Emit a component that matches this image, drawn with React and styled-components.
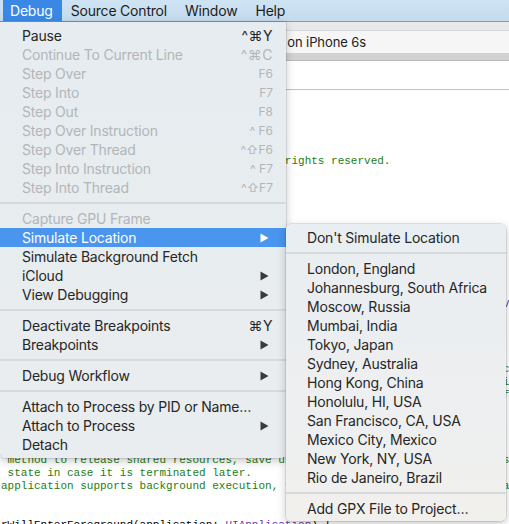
import React from "react";
import styled, { createGlobalStyle } from "styled-components";

const GlobalStyle = createGlobalStyle`
  html, body {
    margin: 0;
    padding: 0;
    background: #ffffff;
  }
  body {
    width: 509px;
    height: 524px;
    overflow: hidden;
    font-family: Inter, "Liberation Sans", "DejaVu Sans", sans-serif;
  }
`;

const GREEN = "#1d7d12";
const PURPLE = "#6c36a9";
const BLACK = "#000000";

const blank = [["", BLACK]];

// editor lines, each an array of [text, colour]
const codeLines = [
  [["//", GREEN]],
  [["//  AppDelegate.swift", GREEN]],
  [["//  Bullseye", GREEN]],
  [["//", GREEN]],
  [["//  Created by M. Hollemans.", GREEN]],
  [["    //  Copyright © 2016 Razeware LLC. All rights reserved.", GREEN]],
  [["//", GREEN]],
  blank,
  [["import UIKit", BLACK]],
  blank,
  [["@UIApplicationMain", BLACK]],
  [["class AppDelegate: UIResponder, UIApplicationDelegate {", BLACK]],
  blank,
  [["    var window: UIWindow?", BLACK]],
  blank,
  blank,
  [
    ["    func application(application: UIApplication, didFinishLaunching".padEnd(76), BLACK],
    ["Var", PURPLE],
  ],
  [["        // Override point for customization after application launch.", GREEN]],
  [["        return true", BLACK]],
  [["    }", BLACK]],
  blank,
  [["        // Sent when the application is about to move from active to in".padEnd(76) + "c", GREEN]],
  [["        // Use this method to pause ongoing tasks, disable timers, and ".padEnd(76) + "i", GREEN]],
  [["    }".padEnd(76) + "f", GREEN]],
  blank,
  [["    func applicationDidEnterBackground(application: UIApplication) {", BLACK]],
  blank,
  blank,
  [[" method to release shared resources, save user data, invalidate timers, and store", GREEN]],
  [[" state in case it is terminated later.", GREEN]],
  [["application supports background execution, this method is called instead of applicationWillTerminate: when the user quits.", GREEN]],
  blank,
  blank,
  [
    ["rWillEnterForeground(application: ", BLACK],
    ["UIApplication", PURPLE],
    [") {", BLACK],
  ],
];

const debugItems = [
  { label: "Pause", keys: "^⌘Y" },
  { label: "Continue To Current Line", keys: "^⌘C", disabled: true },
  { label: "Step Over", keys: "F6", small: true, disabled: true },
  { label: "Step Into", keys: "F7", small: true, disabled: true },
  { label: "Step Out", keys: "F8", small: true, disabled: true },
  { label: "Step Over Instruction", keys: "^ F6", small: true, disabled: true },
  { label: "Step Over Thread", keys: "^⇧F6", small: true, disabled: true },
  { label: "Step Into Instruction", keys: "^ F7", small: true, disabled: true },
  { label: "Step Into Thread", keys: "^⇧F7", small: true, disabled: true },
  "sep",
  { label: "Capture GPU Frame", disabled: true },
  { label: "Simulate Location", sub: true, active: true },
  { label: "Simulate Background Fetch" },
  { label: "iCloud", sub: true },
  { label: "View Debugging", sub: true },
  "sep",
  { label: "Deactivate Breakpoints", keys: "⌘Y" },
  { label: "Breakpoints", sub: true },
  "sep",
  { label: "Debug Workflow", sub: true },
  "sep",
  { label: "Attach to Process by PID or Name…" },
  { label: "Attach to Process", sub: true },
  { label: "Detach" },
];

const locations = [
  "London, England",
  "Johannesburg, South Africa",
  "Moscow, Russia",
  "Mumbai, India",
  "Tokyo, Japan",
  "Sydney, Australia",
  "Hong Kong, China",
  "Honolulu, HI, USA",
  "San Francisco, CA, USA",
  "Mexico City, Mexico",
  "New York, NY, USA",
  "Rio de Janeiro, Brazil",
];

const SubArrow = ({ color }) => (
  <svg width="9" height="10" viewBox="0 0 9 10">
    <path d="M0.5 0.5 L8.5 5 L0.5 9.5 Z" fill={color} />
  </svg>
);

const App = () => {
  return (
    <Screen>
      <GlobalStyle />
      <MenuBar>
        <MenuTitle $open>Debug</MenuTitle>
        <MenuTitle>Source Control</MenuTitle>
        <MenuTitle>Window</MenuTitle>
        <MenuTitle>Help</MenuTitle>
      </MenuBar>

      <Window>
        <Toolbar>
          <StatusBox>
            <StatusText>Running Bullseyes on iPhone 6s</StatusText>
          </StatusBox>
        </Toolbar>
        <TabStrip />
        <JumpBar />
        <Editor>
          {codeLines.map((line, i) => (
            <CodeLine key={i}>
              {line.map(([text, color], j) => (
                <span key={j} style={{ color }}>
                  {text}
                </span>
              ))}
            </CodeLine>
          ))}
        </Editor>
      </Window>

      {/* Debug menu dropped from the menubar */}
      <DebugMenu>
        {debugItems.map((item, i) =>
          item === "sep" ? (
            <Separator key={i} />
          ) : (
            <Item key={i} $disabled={item.disabled} $active={item.active}>
              <Label>{item.label}</Label>
              {item.keys && <Keys $small={item.small}>{item.keys}</Keys>}
              {item.sub && (
                <ArrowBox>
                  <SubArrow color={item.active ? "#ffffff" : "#3a3a3a"} />
                </ArrowBox>
              )}
            </Item>
          )
        )}
      </DebugMenu>

      {/* Simulate Location submenu */}
      <SubMenu>
        <Item $sub>
          <Label>Don't Simulate Location</Label>
        </Item>
        <Separator />
        {locations.map((loc) => (
          <Item $sub key={loc}>
            <Label>{loc}</Label>
          </Item>
        ))}
        <Separator />
        <Item $sub>
          <Label>Add GPX File to Project…</Label>
        </Item>
      </SubMenu>
    </Screen>
  );
};

export default App;
//
const Screen = styled.div`
  position: relative;
  width: 509px;
  height: 524px;
  overflow: hidden;
  background: #ffffff;
`;

const MenuBar = styled.div`
  display: flex;
  align-items: stretch;
  height: 22px;
  padding-left: 3px;
  background: linear-gradient(#cfe3f3, #c4dbee);
  border-bottom: 1px solid #8d9aa6;
  box-sizing: border-box;
`;

const MenuTitle = styled.div`
  display: flex;
  align-items: center;
  padding: ${(p) => (p.$open ? "0 9px 0 7px" : "0 9px 0 9px")};
  font-size: 14px;
  letter-spacing: -0.2px;
  color: ${(p) => (p.$open ? "#ffffff" : "#1c1c1c")};
  background: ${(p) => (p.$open ? "#3a88e6" : "transparent")};
`;

const Window = styled.div`
  display: flex;
  flex-direction: column;
`;

const Toolbar = styled.div`
  height: 31px;
  padding-top: 8px;
  box-sizing: border-box;
  background: #e9e9e9;
  border-bottom: 1px solid #a9a9a9;
`;

const StatusBox = styled.div`
  height: 23px;
  background: #f6f6f6;
  border-top: 1px solid #d7d7d7;
  box-sizing: border-box;
  display: flex;
  align-items: center;
`;

const StatusText = styled.div`
  width: 366px;
  text-align: right;
  font-size: 13px;
  letter-spacing: -0.1px;
  color: #222222;
  white-space: nowrap;
  overflow: hidden;
`;

const TabStrip = styled.div`
  height: 7px;
  background: #d2d2d2;
  border-bottom: 1px solid #b9b9b9;
`;

const JumpBar = styled.div`
  height: 28px;
  background: #ffffff;
  border-bottom: 1px solid #c2c2c2;
`;

const Editor = styled.div`
  padding: 0 0 0 1px;
  font-family: "Liberation Mono", "DejaVu Sans Mono", monospace;
  font-size: 11px;
  line-height: 13px;
  white-space: pre;
  overflow: hidden;
`;

const CodeLine = styled.div`
  height: 13px;
`;

const MenuPanel = styled.div`
  position: absolute;
  box-sizing: border-box;
  padding: 4px 0;
  box-shadow: 0 3px 10px rgba(0, 0, 0, 0.22), 0 0 0 0.5px rgba(0, 0, 0, 0.18);
  font-size: 14px;
  letter-spacing: -0.2px;
`;

const DebugMenu = styled(MenuPanel)`
  top: 22px;
  left: 0;
  width: 286px;
  border-radius: 0 0 5px 5px;
  background: linear-gradient(#e6ecf0, #e9edef);
`;

const SubMenu = styled(MenuPanel)`
  top: 224px;
  left: 286px;
  width: 220px;
  padding: 4px 0 3px;
  border-radius: 5px;
  background: linear-gradient(#e9eef2, #eeeff0 70%, #f1f0ec);
`;

const Item = styled.div`
  display: flex;
  align-items: center;
  height: 19px;
  padding: ${(p) => (p.$sub ? "0 12px 0 21px" : "0 13px 0 22px")};
  color: ${(p) =>
    p.$active ? "#ffffff" : p.$disabled ? "#b3b6b9" : "#262626"};
  background: ${(p) => (p.$active ? "#4a95ee" : "transparent")};
  white-space: nowrap;
`;

const Label = styled.span`
  flex: 1;
`;

const Keys = styled.span`
  font-size: ${(p) => (p.$small ? "12px" : "14px")};
  letter-spacing: ${(p) => (p.$small ? "0" : "0.5px")};
  font-family: Inter, "DejaVu Sans", sans-serif;
`;

const ArrowBox = styled.span`
  display: flex;
  align-items: center;
  margin-right: 4px;
`;

const Separator = styled.div`
  height: 2px;
  margin: 5px 0;
  background: #d6dadd;
`;
